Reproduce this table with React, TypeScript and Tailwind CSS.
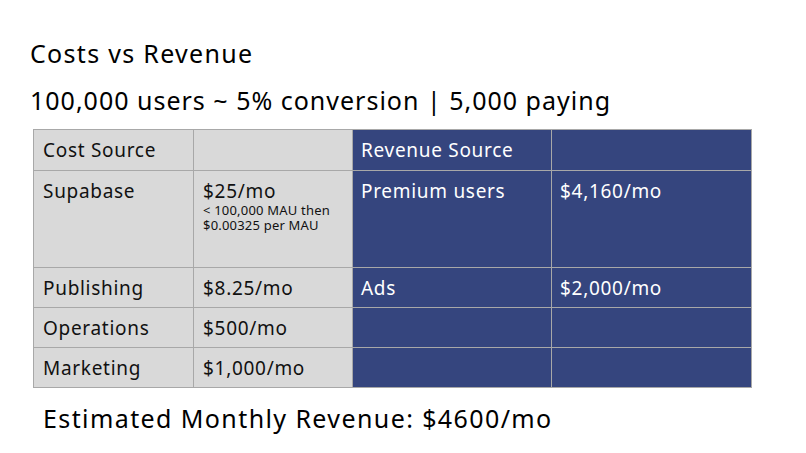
const costs = [
  { name: "Supabase", amount: "$25/mo", note: ["< 100,000 MAU then", "$0.00325 per MAU"] },
  { name: "Publishing", amount: "$8.25/mo" },
  { name: "Operations", amount: "$500/mo" },
  { name: "Marketing", amount: "$1,000/mo" },
];

const revenue = [
  { name: "Premium users", amount: "$4,160/mo" },
  { name: "Ads", amount: "$2,000/mo" },
  { name: "", amount: "" },
  { name: "", amount: "" },
];

const rowHeights = ["h-[97px]", "h-[40px]", "h-[40px]", "h-[40px]"];

export default function App() {
  return (
    <div
      className="w-[806px] h-[453px] bg-white text-black overflow-hidden"
      style={{ fontFamily: "'Noto Sans', Lato, sans-serif" }}
    >
      <div className="pl-[30px] pt-[37px]">
        <h1 className="text-[25px] leading-[32px] tracking-[1.3px]">Costs vs Revenue</h1>
        <p className="text-[25px] leading-[32px] mt-[15px] tracking-[1px]">
          100,000 users ~ 5% conversion | 5,000 paying
        </p>
      </div>

      <table className="ml-[33px] mt-[13px] border-collapse text-[19px] leading-[24px] tracking-[0.7px] text-[#111]">
        <tbody>
          <tr className="h-[41px]">
            <td className="w-[160px] bg-[#d9d9d9] border border-[#a8a8a8] px-[9px] align-middle">
              Cost Source
            </td>
            <td className="w-[159px] bg-[#d9d9d9] border border-[#a8a8a8] px-[9px]" />
            <td className="w-[199px] bg-[#35457e] text-white border border-[#a8a8a8] px-[8px]">
              Revenue Source
            </td>
            <td className="w-[200px] bg-[#35457e] text-white border border-[#a8a8a8] px-[8px]" />
          </tr>
          {costs.map((c, i) => (
            <tr key={c.name} className={rowHeights[i]}>
              <td className="bg-[#d9d9d9] border border-[#a8a8a8] px-[9px] pt-[8px] align-top">
                {c.name}
              </td>
              <td className="bg-[#d9d9d9] border border-[#a8a8a8] px-[9px] pt-[8px] align-top">
                <div>{c.amount}</div>
                {c.note && (
                  <div className="text-[13px] leading-[15px] tracking-[0.2px]">
                    {c.note.map((n) => (
                      <div key={n}>{n}</div>
                    ))}
                  </div>
                )}
              </td>
              <td className="bg-[#35457e] text-white border border-[#a8a8a8] px-[8px] pt-[8px] align-top">
                {revenue[i].name}
              </td>
              <td className="bg-[#35457e] text-white border border-[#a8a8a8] px-[8px] pt-[8px] align-top">
                {revenue[i].amount}
              </td>
            </tr>
          ))}
        </tbody>
      </table>

      <p className="pl-[43px] mt-[14px] text-[25px] leading-[32px] tracking-[1.4px]">
        Estimated Monthly Revenue: $4600/mo
      </p>
    </div>
  );
}
